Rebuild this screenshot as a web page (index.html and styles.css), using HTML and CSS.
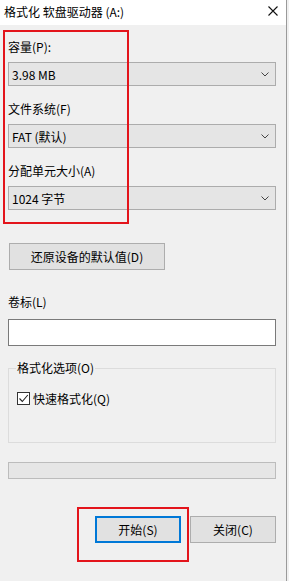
FILE: index.html
```html
<!DOCTYPE html>
<html lang="zh-CN">
<head>
<meta charset="utf-8">
<title>格式化 软盘驱动器 (A:)</title>
<link rel="stylesheet" href="styles.css">
</head>
<body>
<div class="window">
  <div class="titlebar">
    <span class="title">格式化 软盘驱动器 (A:)</span>
    <svg class="close" width="10" height="10" viewBox="0 0 10 10"><path d="M0.5 0.5 L9.5 9.5 M9.5 0.5 L0.5 9.5" stroke="#111" stroke-width="1.1" fill="none"/></svg>
  </div>
  <div class="content">
    <div class="label first">容量(P):</div>
    <div class="combo"><span>3.98 MB</span><svg class="chev" width="8" height="5" viewBox="0 0 8 5"><path d="M0.5 0.5 L4 4 L7.5 0.5" stroke="#444" stroke-width="1" fill="none"/></svg></div>
    <div class="label">文件系统(F)</div>
    <div class="combo"><span>FAT (默认)</span><svg class="chev" width="8" height="5" viewBox="0 0 8 5"><path d="M0.5 0.5 L4 4 L7.5 0.5" stroke="#444" stroke-width="1" fill="none"/></svg></div>
    <div class="label">分配单元大小(A)</div>
    <div class="combo"><span>1024 字节</span><svg class="chev" width="8" height="5" viewBox="0 0 8 5"><path d="M0.5 0.5 L4 4 L7.5 0.5" stroke="#444" stroke-width="1" fill="none"/></svg></div>
    <button class="btn reset">还原设备的默认值(D)</button>
    <div class="label vol">卷标(L)</div>
    <div class="input"></div>
    <fieldset class="group">
      <legend>格式化选项(O)</legend>
      <div class="check-row">
        <span class="checkbox"><svg width="11" height="11" viewBox="0 0 11 11"><path d="M1.5 5.5 L4.3 8.5 L9.8 2" stroke="#222" stroke-width="1.1" fill="none"/></svg></span>
        <span>快速格式化(Q)</span>
      </div>
    </fieldset>
    <div class="progress"></div>
    <div class="actions">
      <button class="btn action default">开始(S)</button>
      <button class="btn action">关闭(C)</button>
    </div>
  </div>
  <div class="mark mark-top"></div>
  <div class="mark mark-bottom"></div>
</div>
</body>
</html>
```
FILE: styles.css
```css
html, body {
  margin: 0;
  padding: 0;
  background: #f0f0f0;
}
body {
  font-family: "Noto Sans CJK SC", "Noto Sans", sans-serif;
  font-size: 12px;
  color: #000;
}
.window {
  position: relative;
  width: 286px;
  height: 581px;
  background: #f0f0f0;
  border-right: 1px solid #9a9a9a;
  overflow: hidden;
}
.titlebar {
  height: 25px;
  background: #fff;
  display: flex;
  align-items: center;
  justify-content: space-between;
  padding: 0 8px 0 4px;
}
.title {
  font-size: 12px;
  line-height: 16px;
  margin-top: -2px;
}
.close {
  display: block;
  margin-top: -4px;
}
.content {
  display: flex;
  flex-direction: column;
  padding: 0 0 0 8px;
  width: 268px;
}
.label {
  height: 16px;
  line-height: 16px;
  margin-top: 15px;
  margin-bottom: 7px;
}
.label.first {
  margin-top: 14px;
  margin-bottom: 7px;
}
.label.vol {
  margin-top: 24px;
  margin-bottom: 9px;
}
.combo {
  box-sizing: border-box;
  height: 24px;
  border: 1px solid #acacac;
  background: #e5e5e5;
  display: flex;
  align-items: center;
  justify-content: space-between;
  padding: 0 6px 0 3px;
}
.chev {
  display: block;
  margin-top: 1px;
}
.btn {
  font-family: inherit;
  font-size: 12px;
  color: #000;
  background: #e1e1e1;
  border: 1px solid #adadad;
  padding: 0;
  box-sizing: border-box;
}
.reset {
  width: 156px;
  height: 27px;
  margin-top: 33px;
  margin-left: 1px;
}
.input {
  box-sizing: border-box;
  height: 27px;
  background: #fff;
  border: 1px solid #7a7a7a;
}
.group {
  box-sizing: border-box;
  margin: 14px 0 0 0;
  height: 83px;
  border: 1px solid #dcdcdc;
  padding: 0 0 0 8px;
}
.group legend {
  padding: 0 1px;
  margin-left: -1px;
  line-height: 16px;
  height: 16px;
}
.check-row {
  display: flex;
  align-items: center;
  gap: 3px;
  margin-top: 15px;
  height: 15px;
}
.checkbox {
  box-sizing: border-box;
  width: 13px;
  height: 13px;
  border: 1px solid #333;
  background: #fff;
  display: flex;
  align-items: center;
  justify-content: center;
}
.checkbox svg {
  display: block;
}
.progress {
  box-sizing: border-box;
  margin-top: 19px;
  height: 17px;
  background: #e6e6e6;
  border: 1px solid #bcbcbc;
}
.actions {
  display: flex;
  justify-content: flex-end;
  gap: 9px;
  margin-top: 37px;
}
.action {
  width: 86px;
  height: 27px;
}
.action.default {
  border: 2px solid #0078d7;
}
.mark {
  position: absolute;
  border: 2px solid #e3141b;
  box-sizing: border-box;
}
.mark-top {
  left: 3px;
  top: 30px;
  width: 126px;
  height: 194px;
}
.mark-bottom {
  left: 77px;
  top: 507px;
  width: 112px;
  height: 55px;
}
```
